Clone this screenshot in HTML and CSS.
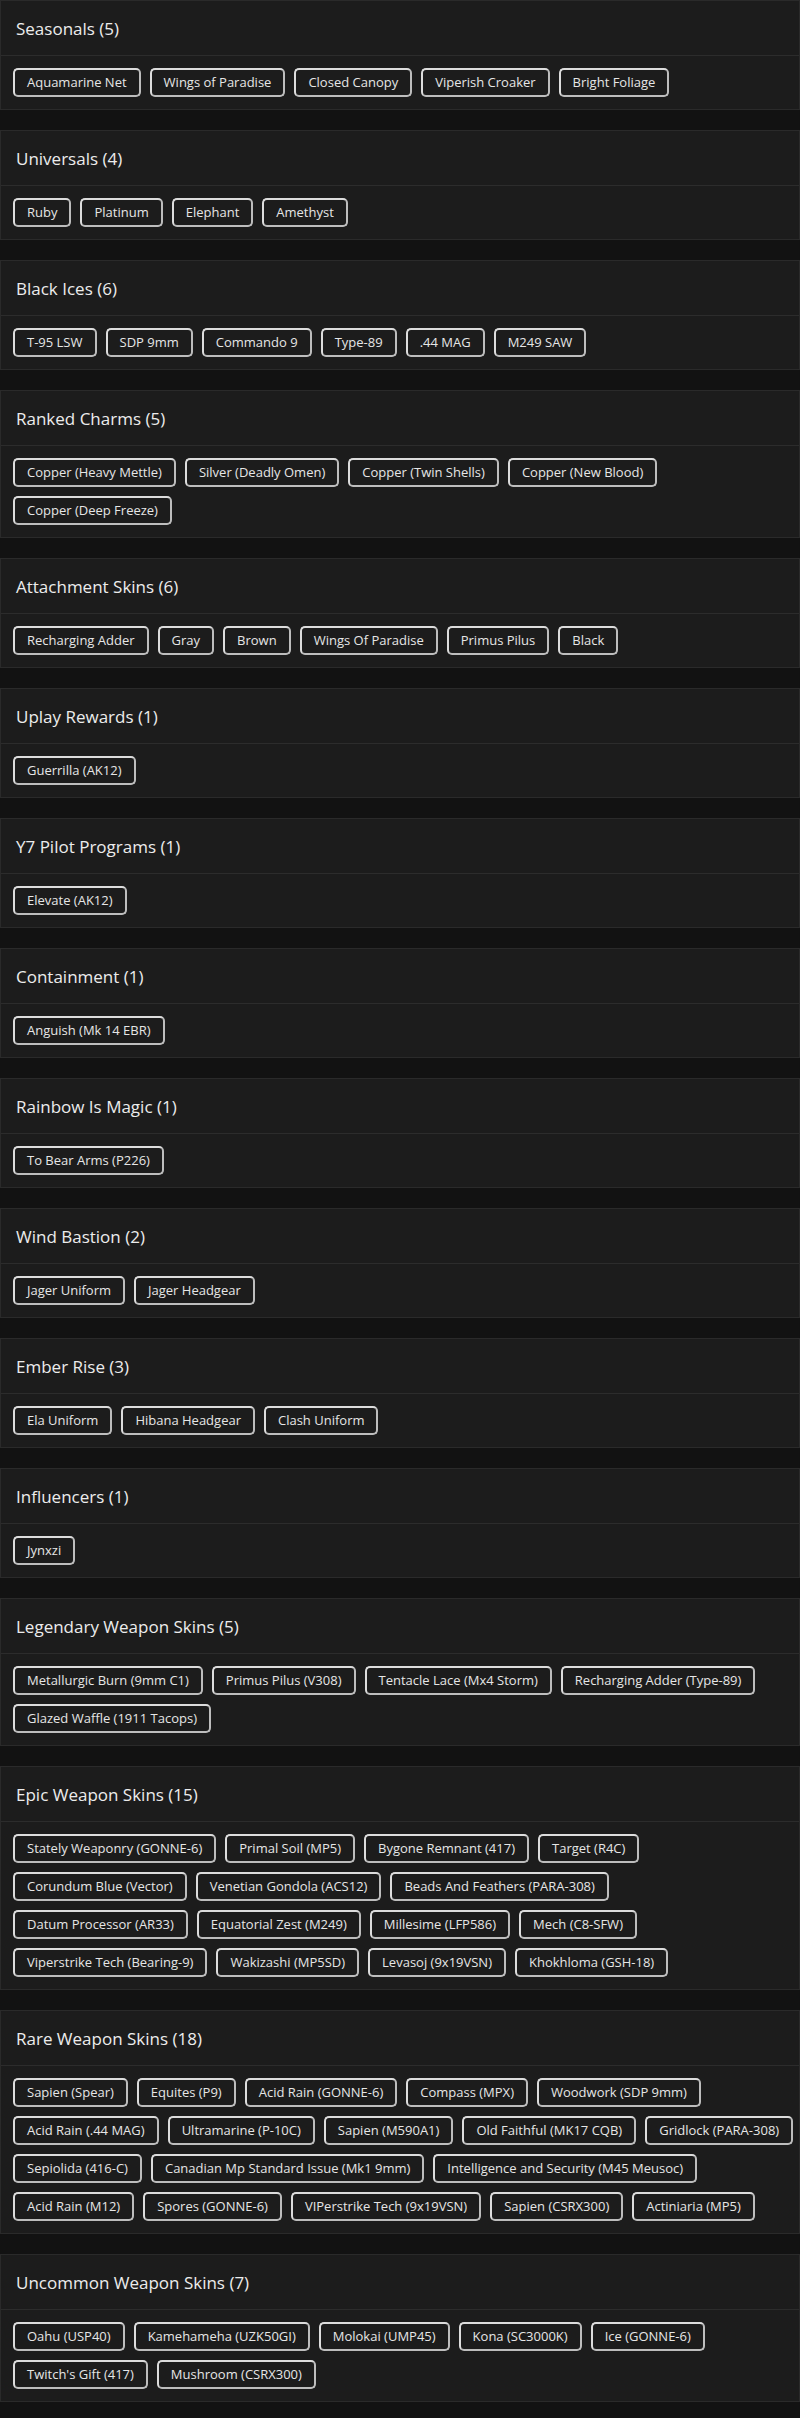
FILE: index.html
```html
<!DOCTYPE html>
<html lang="en">
<head>
<meta charset="utf-8">
<title>Collection</title>
<link rel="stylesheet" href="styles.css">
</head>
<body>
<main class="page">

<section class="card">
  <h2 class="card-title">Seasonals (5)</h2>
  <div class="card-body">
    <div class="tag-row"><span class="tag">Aquamarine Net</span><span class="tag">Wings of Paradise</span><span class="tag">Closed Canopy</span><span class="tag">Viperish Croaker</span><span class="tag">Bright Foliage</span></div>
  </div>
</section>

<section class="card">
  <h2 class="card-title">Universals (4)</h2>
  <div class="card-body">
    <div class="tag-row"><span class="tag">Ruby</span><span class="tag">Platinum</span><span class="tag">Elephant</span><span class="tag">Amethyst</span></div>
  </div>
</section>

<section class="card">
  <h2 class="card-title">Black Ices (6)</h2>
  <div class="card-body">
    <div class="tag-row"><span class="tag">T-95 LSW</span><span class="tag">SDP 9mm</span><span class="tag">Commando 9</span><span class="tag">Type-89</span><span class="tag">.44 MAG</span><span class="tag">M249 SAW</span></div>
  </div>
</section>

<section class="card">
  <h2 class="card-title">Ranked Charms (5)</h2>
  <div class="card-body">
    <div class="tag-row"><span class="tag">Copper (Heavy Mettle)</span><span class="tag">Silver (Deadly Omen)</span><span class="tag">Copper (Twin Shells)</span><span class="tag">Copper (New Blood)</span></div>
    <div class="tag-row"><span class="tag">Copper (Deep Freeze)</span></div>
  </div>
</section>

<section class="card">
  <h2 class="card-title">Attachment Skins (6)</h2>
  <div class="card-body">
    <div class="tag-row"><span class="tag">Recharging Adder</span><span class="tag">Gray</span><span class="tag">Brown</span><span class="tag">Wings Of Paradise</span><span class="tag">Primus Pilus</span><span class="tag">Black</span></div>
  </div>
</section>

<section class="card">
  <h2 class="card-title">Uplay Rewards (1)</h2>
  <div class="card-body">
    <div class="tag-row"><span class="tag">Guerrilla (AK12)</span></div>
  </div>
</section>

<section class="card">
  <h2 class="card-title">Y7 Pilot Programs (1)</h2>
  <div class="card-body">
    <div class="tag-row"><span class="tag">Elevate (AK12)</span></div>
  </div>
</section>

<section class="card">
  <h2 class="card-title">Containment (1)</h2>
  <div class="card-body">
    <div class="tag-row"><span class="tag">Anguish (Mk 14 EBR)</span></div>
  </div>
</section>

<section class="card">
  <h2 class="card-title">Rainbow Is Magic (1)</h2>
  <div class="card-body">
    <div class="tag-row"><span class="tag">To Bear Arms (P226)</span></div>
  </div>
</section>

<section class="card">
  <h2 class="card-title">Wind Bastion (2)</h2>
  <div class="card-body">
    <div class="tag-row"><span class="tag">Jager Uniform</span><span class="tag">Jager Headgear</span></div>
  </div>
</section>

<section class="card">
  <h2 class="card-title">Ember Rise (3)</h2>
  <div class="card-body">
    <div class="tag-row"><span class="tag">Ela Uniform</span><span class="tag">Hibana Headgear</span><span class="tag">Clash Uniform</span></div>
  </div>
</section>

<section class="card">
  <h2 class="card-title">Influencers (1)</h2>
  <div class="card-body">
    <div class="tag-row"><span class="tag">Jynxzi</span></div>
  </div>
</section>

<section class="card">
  <h2 class="card-title">Legendary Weapon Skins (5)</h2>
  <div class="card-body">
    <div class="tag-row"><span class="tag">Metallurgic Burn (9mm C1)</span><span class="tag">Primus Pilus (V308)</span><span class="tag">Tentacle Lace (Mx4 Storm)</span><span class="tag">Recharging Adder (Type-89)</span></div>
    <div class="tag-row"><span class="tag">Glazed Waffle (1911 Tacops)</span></div>
  </div>
</section>

<section class="card">
  <h2 class="card-title">Epic Weapon Skins (15)</h2>
  <div class="card-body">
    <div class="tag-row"><span class="tag">Stately Weaponry (GONNE-6)</span><span class="tag">Primal Soil (MP5)</span><span class="tag">Bygone Remnant (417)</span><span class="tag">Target (R4C)</span></div>
    <div class="tag-row"><span class="tag">Corundum Blue (Vector)</span><span class="tag">Venetian Gondola (ACS12)</span><span class="tag">Beads And Feathers (PARA-308)</span></div>
    <div class="tag-row"><span class="tag">Datum Processor (AR33)</span><span class="tag">Equatorial Zest (M249)</span><span class="tag">Millesime (LFP586)</span><span class="tag">Mech (C8-SFW)</span></div>
    <div class="tag-row"><span class="tag">Viperstrike Tech (Bearing-9)</span><span class="tag">Wakizashi (MP5SD)</span><span class="tag">Levasoj (9x19VSN)</span><span class="tag">Khokhloma (GSH-18)</span></div>
  </div>
</section>

<section class="card">
  <h2 class="card-title">Rare Weapon Skins (18)</h2>
  <div class="card-body">
    <div class="tag-row"><span class="tag">Sapien (Spear)</span><span class="tag">Equites (P9)</span><span class="tag">Acid Rain (GONNE-6)</span><span class="tag">Compass (MPX)</span><span class="tag">Woodwork (SDP 9mm)</span></div>
    <div class="tag-row"><span class="tag">Acid Rain (.44 MAG)</span><span class="tag">Ultramarine (P-10C)</span><span class="tag">Sapien (M590A1)</span><span class="tag">Old Faithful (MK17 CQB)</span><span class="tag">Gridlock (PARA-308)</span></div>
    <div class="tag-row"><span class="tag">Sepiolida (416-C)</span><span class="tag">Canadian Mp Standard Issue (Mk1 9mm)</span><span class="tag">Intelligence and Security (M45 Meusoc)</span></div>
    <div class="tag-row"><span class="tag">Acid Rain (M12)</span><span class="tag">Spores (GONNE-6)</span><span class="tag">VIPerstrike Tech (9x19VSN)</span><span class="tag">Sapien (CSRX300)</span><span class="tag">Actiniaria (MP5)</span></div>
  </div>
</section>

<section class="card">
  <h2 class="card-title">Uncommon Weapon Skins (7)</h2>
  <div class="card-body">
    <div class="tag-row"><span class="tag">Oahu (USP40)</span><span class="tag">Kamehameha (UZK50GI)</span><span class="tag">Molokai (UMP45)</span><span class="tag">Kona (SC3000K)</span><span class="tag">Ice (GONNE-6)</span></div>
    <div class="tag-row"><span class="tag">Twitch's Gift (417)</span><span class="tag">Mushroom (CSRX300)</span></div>
  </div>
</section>

</main>
</body>
</html>
```

FILE: styles.css
```css
html, body {
  margin: 0;
  padding: 0;
  background: #121212;
}

body {
  font-family: "Open Sans", "Noto Sans", "Liberation Sans", sans-serif;
  color: #e4e4e4;
}

.page {
  display: flex;
  flex-direction: column;
  gap: 20px;
}

.card {
  background: #1c1c1c;
  border: 1px solid #2a2a2a;
}

.card-title {
  margin: 0;
  height: 54px;
  display: flex;
  align-items: center;
  padding: 0 15px;
  font-size: 17px;
  font-weight: 500;
  color: #ececec;
  border-bottom: 1px solid #2c2c2c;
}

.card-body {
  padding: 12px 12px;
  display: flex;
  flex-direction: column;
  gap: 9px;
}

.tag-row {
  display: flex;
  gap: 9px;
}

.tag {
  display: inline-block;
  white-space: nowrap;
  height: 25px;
  line-height: 25px;
  padding: 0 12px;
  font-size: 13px;
  font-weight: 500;
  color: #e6e6e6;
  border: 2px solid #dcdcdc;
  border-right-color: #bdbdbd;
  border-bottom-color: #bdbdbd;
  border-radius: 5px;
}
```
